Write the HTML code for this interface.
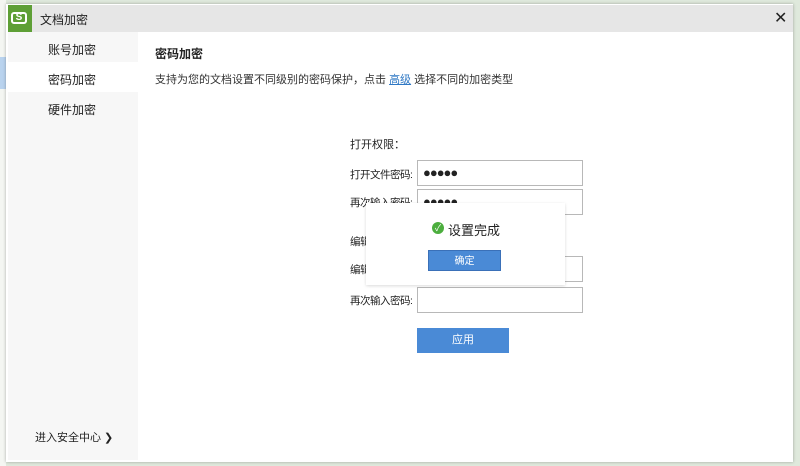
<!DOCTYPE html>
<html><head><meta charset="utf-8"><style>
body{margin:0;width:800px;height:466px;background:#dfe9dc;position:relative;overflow:hidden;font-family:"Liberation Sans","Noto Sans CJK SC",sans-serif;color:#222}
.a{position:absolute}
.dlg{left:6px;top:4px;width:787px;height:458px;background:#fff;box-shadow:0 0 3px rgba(0,0,0,.3)}
.t{font-size:11px;white-space:nowrap}
.l{font-size:10.5px;letter-spacing:-0.5px}
.inp{position:absolute;left:417px;width:166px;height:26px;border:1px solid #b8b8b8;background:#fff;box-sizing:border-box;font-size:13px;line-height:23px;padding-left:5px;letter-spacing:-1px}
</style></head><body>
<div class="a" style="left:0;top:0;width:6px;height:466px;background:#f4f6f2"></div>
<div class="a" style="left:0;top:57px;width:6px;height:32px;background:#b9d3ee"></div>
<div class="a dlg"></div>
<div class="a" style="left:8px;top:5px;width:785px;height:27px;background:#e6e6e6"></div>
<div class="a" style="left:8px;top:5px;width:24px;height:27px;background:#5e9f36"></div>
<div class="a" style="left:11px;top:12px;width:16px;height:12px;border:2px solid #fff;border-radius:3px;box-sizing:border-box;color:#fff;font-size:10px;font-weight:bold;text-align:center;line-height:8px">S</div>
<div class="a t" style="left:40px;top:11px;font-size:12px">文档加密</div>
<div class="a" style="left:774px;top:8px;font-size:16px;color:#222">✕</div>
<div class="a" style="left:8px;top:32px;width:130px;height:428px;background:#f7f7f7"></div>
<div class="a" style="left:8px;top:62px;width:130px;height:30px;background:#fff"></div>
<div class="a t" style="left:48px;top:41px;font-size:12px">账号加密</div>
<div class="a t" style="left:48px;top:71px;font-size:12px">密码加密</div>
<div class="a t" style="left:48px;top:101px;font-size:12px">硬件加密</div>
<div class="a t" style="left:35px;top:429px">进入安全中心 ❯</div>
<div class="a t" style="left:155px;top:45px;font-size:12px;font-weight:bold">密码加密</div>
<div class="a t" style="left:155px;top:71px;color:#333">支持为您的文档设置不同级别的密码保护，点击 <span style="color:#2f78c4;text-decoration:underline">高级</span> 选择不同的加密类型</div>
<div class="a t" style="left:350px;top:136px">打开权限：</div>
<div class="a t l" style="left:350px;top:167px">打开文件密码:</div>
<div class="inp" style="top:160px">●●●●●</div>
<div class="a t l" style="left:350px;top:195px">再次输入密码:</div>
<div class="inp" style="top:189px">●●●●●</div>
<div class="a t l" style="left:350px;top:234px">编辑权限：</div>
<div class="a t l" style="left:350px;top:262px">编辑文件密码:</div>
<div class="inp" style="top:256px"></div>
<div class="a t l" style="left:350px;top:293px">再次输入密码:</div>
<div class="inp" style="top:287px"></div>
<div class="a" style="left:417px;top:328px;width:92px;height:25px;background:#4a8ad6;color:#fff;font-size:11px;text-align:center;line-height:25px">应用</div>
<div class="a" style="left:366px;top:203px;width:199px;height:82px;background:#fff;box-shadow:0 1px 3px rgba(0,0,0,.15)"></div>
<div class="a" style="left:432px;top:222px;width:12px;height:12px;border-radius:50%;background:#4cae3e;color:#fff;font-size:9px;text-align:center;line-height:12px">✓</div>
<div class="a t" style="left:448px;top:220px;font-size:13px">设置完成</div>
<div class="a" style="left:428px;top:250px;width:73px;height:21px;background:#4a8ad6;color:#fff;font-size:10px;text-align:center;line-height:21px;border:1px solid #3a70b8;box-sizing:border-box">确定</div>
</body></html>
